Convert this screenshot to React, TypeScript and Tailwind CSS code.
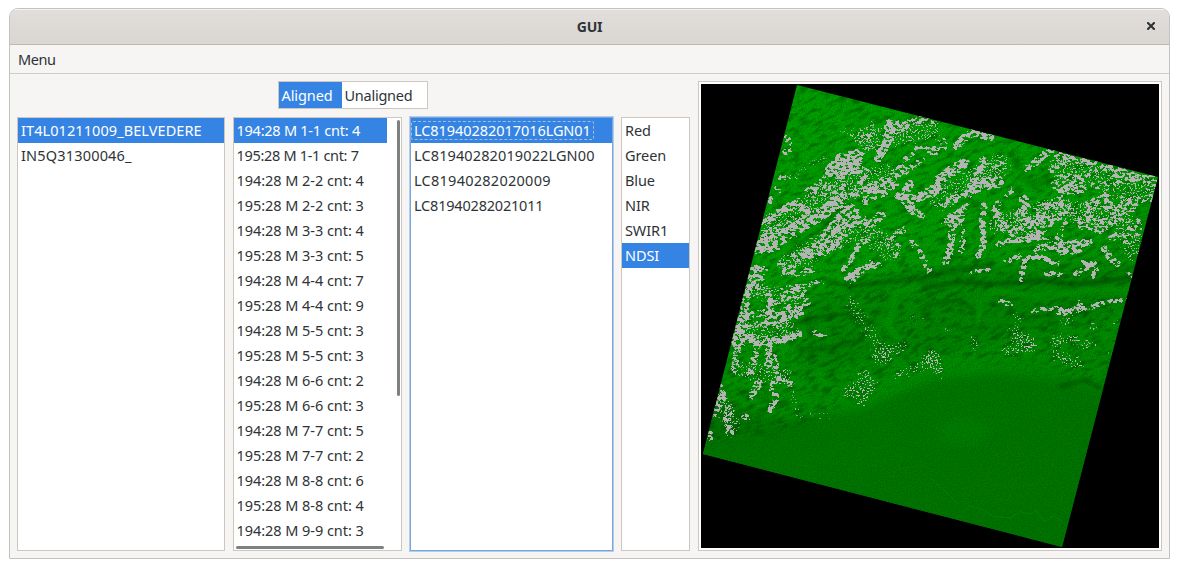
import React from "react";

type Item = [label: string, tracking?: string];

const scenes: Item[] = [
  ["IT4L01211009_BELVEDERE", "tracking-[0.08px]"],
  ["IN5Q31300046_", "tracking-[0.18px]"],
];

const groups: Item[] = [
  ["194:28 M 1-1 cnt: 4", "tracking-[-0.25px]"],
  ["195:28 M 1-1 cnt: 7", "tracking-[-0.32px]"],
  ["194:28 M 2-2 cnt: 4"],
  ["195:28 M 2-2 cnt: 3"],
  ["194:28 M 3-3 cnt: 4"],
  ["195:28 M 3-3 cnt: 5"],
  ["194:28 M 4-4 cnt: 7"],
  ["195:28 M 4-4 cnt: 9"],
  ["194:28 M 5-5 cnt: 3"],
  ["195:28 M 5-5 cnt: 3"],
  ["194:28 M 6-6 cnt: 2"],
  ["195:28 M 6-6 cnt: 3"],
  ["194:28 M 7-7 cnt: 5"],
  ["195:28 M 7-7 cnt: 2"],
  ["194:28 M 8-8 cnt: 6"],
  ["195:28 M 8-8 cnt: 4"],
  ["194:28 M 9-9 cnt: 3"],
];

const products: Item[] = [
  ["LC81940282017016LGN01", "tracking-[-0.06px]"],
  ["LC81940282019022LGN00", "tracking-[0.12px]"],
  ["LC81940282020009", "tracking-[0.26px]"],
  ["LC81940282021011", "tracking-[-0.2px]"],
];

const bands: Item[] = [["Red"], ["Green"], ["Blue"], ["NIR"], ["SWIR1"], ["NDSI"]];

type Stroke = [d: string, width: number, density: number];

// Snow cover: each stroke is a ridge or snow field with its own density.
const snow: Stroke[] = [
  ["M832 170 L842 160 L856 157 L856 166 L838 172", 11, 1],
  ["M889 124 L889 138 L884 148 L878 158", 7, 1],
  ["M892 126 L903 124 M898 130 L912 122 L925 118 L934 121", 7, 0.75],
  ["M858 140 L874 134 L872 124 M858 152 L872 148", 6, 0.6],
  ["M900 165 L912 154 L922 145 L934 152 M906 172 L922 160", 6, 0.65],
  ["M872 190 L886 180 L902 170 M884 192 L896 182 M866 172 L860 180", 8, 0.65],
  ["M898 196 L906 200 L912 210 M908 200 L922 196 L938 187 M906 190 L910 184", 7, 1],
  ["M912 210 L922 216", 6, 0.75],
  ["M764 222 L776 214 L796 204 M790 206 L806 208", 7, 0.85],
  ["M758 246 L776 240 L792 232 L806 223 L824 212 L838 200", 11, 0.75],
  ["M762 236 L780 228 L796 222 L812 214", 9, 0.6],
  ["M810 220 L824 212 L834 204", 8, 1],
  ["M757 250 L776 248", 7, 0.75],
  ["M806 190 L820 186 L826 176 M838 196 L846 182 M815 197 L838 186", 8, 0.6],
  ["M828 240 L838 230 L850 214", 17, 0.75],
  ["M806 254 L820 246 L838 246", 8, 0.65],
  ["M796 262 L812 256 L826 252 M790 258 L812 246", 5, 0.65],
  ["M848 196 L860 192 L874 186 M866 200 L880 192", 9, 0.68],
  ["M858 222 L872 224 L882 214", 8, 0.68],
  ["M843 270 L851 260 L860 243 L868 240 M846 278 L856 270 L880 265 M852 282 L864 268 L872 262", 4.5, 0.95],
  ["M888 243 L898 232 L908 228 M894 256 L898 246 M912 242 L922 256 L930 272", 6, 0.65],
  ["M776 178 L800 176 M776 188 L780 192", 5, 0.65],
  ["M786 138 L790 142 M784 153 L790 150", 5, 0.85],
  ["M770 196 L771 202", 5, 0.8],
  ["M755 270 L749 284 L744 304 L740 326 L736 342", 9, 0.78],
  ["M756 270 L764 270 M780 264 L792 268 M784 274 L802 272 L812 270", 7, 0.65],
  ["M782 290 L798 286 L822 282 M766 290 L772 304 L768 318 M762 278 L758 292", 6, 0.65],
  ["M770 304 L786 298 L804 292 M776 316 L790 308 L808 302 M784 320 L800 314", 7, 0.65],
  ["M745 316 L764 312 L784 316 L800 312 M746 326 L764 324 L784 324", 7, 0.63],
  ["M738 338 L756 338 L772 342 L788 338 L798 334", 7, 0.9],
  ["M757 342 L755 358 L750 372 M769 342 L768 364 M742 342 L736 356 L734 370", 7, 0.7],
  ["M775 358 L777 376 M774 382 L788 380 L792 386", 6, 0.7],
  ["M758 382 L752 396 M760 382 L756 388", 6, 0.8],
  ["M772 388 L776 398 L770 410", 6, 0.75],
  ["M722 396 L718 406 L714 414 M730 408 L726 420 L730 434", 7, 0.75],
  ["M744 416 L748 418 M710 432 L710 440", 5, 0.8],
  ["M720 384 L724 400", 6, 0.55],
  ["M812 332 L824 336", 6, 0.6],
  ["M956 146 L964 138 L972 132 L990 137", 7, 0.85],
  ["M932 152 L944 148 M938 144 L948 140", 7, 0.55],
  ["M932 192 L940 180 L950 172 L964 163", 9, 0.9],
  ["M942 206 L956 196 L970 190 M952 202 L974 182 L982 160", 6, 0.7],
  ["M970 192 L980 184 L998 182", 10, 0.85],
  ["M982 172 L986 158 M994 166 L1002 162", 6, 0.6],
  ["M1006 198 L1014 188 M1028 200 L1022 212", 7, 0.5],
  ["M1027 168 L1036 162 L1048 152", 6, 0.95],
  ["M1054 153 L1070 160 L1094 162 M1050 170 L1064 164", 7, 0.7],
  ["M1058 178 L1076 178 L1094 172 M1054 186 L1080 182", 8, 0.63],
  ["M1062 192 L1082 188", 8, 0.85],
  ["M1104 166 L1120 172 L1136 178 L1156 178", 9, 0.6],
  ["M1108 182 L1132 180 M1124 196 L1150 200 L1152 188 M1094 186 L1108 192", 10, 0.48],
  ["M1090 206 L1104 200 L1116 212 L1130 206 M1088 220 L1098 228 L1118 218", 12, 0.65],
  ["M1036 232 L1052 220 L1066 208 M1040 210 L1060 202 M1032 222 L1044 216", 9, 0.68],
  ["M1060 236 L1066 220 M1072 212 L1082 228", 6, 0.6],
  ["M998 216 L1004 228 L1018 232 L1030 238 M1018 216 L1028 224 M1024 200 L1020 222", 10, 0.63],
  ["M998 244 L1016 240 L1038 236", 5, 0.85],
  ["M954 214 L952 232 L950 250 L946 262 M962 210 L960 222", 6, 0.85],
  ["M944 222 L954 214 L966 206 M963 232 L961 252", 6, 0.7],
  ["M984 206 L982 222 L984 244 L978 256 M994 212 L998 204", 6, 0.8],
  ["M1036 250 L1052 248 L1070 244 L1090 242 M1060 252 L1080 250", 6, 0.8],
  ["M1038 240 L1060 240", 8, 0.5],
  ["M1006 261 L1020 256 M1026 260 L1022 272 L1022 280 M1028 258 L1044 258 L1058 264 M1046 274 L1060 274", 4.5, 0.95],
  ["M1076 274 L1090 266 M1082 262 L1096 264 M1096 270 L1094 276", 5, 0.85],
  ["M1104 248 L1110 258 L1118 264 M1108 240 L1120 234", 6, 0.75],
  ["M1130 222 L1128 244 M1138 222 L1138 232", 8, 0.55],
  ["M970 272 L990 270 M1128 272 L1132 278", 3, 0.95],
  ["M1000 301 L1012 305 M1030 312 L1050 308 L1066 310 L1090 308 L1104 302 L1126 300", 4, 0.85],
  ["M1058 314 L1078 310 M1080 302 L1078 310", 5, 0.7],
];

// Loosely scattered snow pixels.
const scatter: Stroke[] = [
  ["M848 392 L874 386 M862 402 L864 374", 18, 0.62],
  ["M896 376 L914 370 L936 358", 14, 0.62],
  ["M880 360 L904 346", 18, 0.54],
  ["M930 352 L942 376", 14, 0.64],
  ["M972 338 L976 350", 12, 0.66],
  ["M908 316 L930 322 M944 326 L950 334", 12, 0.54],
  ["M1012 314 L1024 320 M1060 324 L1074 316 M1088 322 L1096 330", 10, 0.72],
  ["M1010 330 L1030 340 M1052 340 L1076 338 M1082 346 L1094 344", 12, 0.7],
  ["M1006 350 L1032 348 M1056 356 L1080 364", 17, 0.6],
  ["M1104 354 L1112 350 M1112 328 L1118 318", 8, 0.74],
  ["M1040 286 L1092 285", 6, 0.8],
  ["M790 374 L798 416 L830 416", 18, 0.47],
  ["M850 300 L880 350", 24, 0.47],
  ["M800 170 L826 158 M840 130 L866 136", 18, 0.47],
  ["M770 230 L830 190 L890 175 M790 262 L860 225 L890 250 M870 140 L930 130", 30, 0.56],
  ["M940 200 L1000 165 M1000 225 L1050 210 L1120 215 L1135 250 M1060 165 L1145 190", 30, 0.58],
  ["M750 290 L800 300 M745 330 L790 330 M740 370 L775 375 M720 400 L732 425", 24, 0.56],
];

// Valleys and shaded slopes in the terrain.
const valleys: Stroke[] = [
  ["M792 250 L806 240 L826 224 L842 208 L846 198", 3, 0.35],
  ["M828 282 L852 286 L884 282 L924 278 L956 270 L992 264", 5, 0.4],
  ["M790 326 L812 318 L846 314 L872 322", 4, 0.45],
  ["M924 288 L960 282 L1000 284 L1040 280 L1080 284 L1130 278", 5, 0.5],
  ["M800 350 L830 348 L860 340 L880 326", 6, 0.3],
  ["M926 306 L960 300 L976 312 L986 296", 4, 0.4],
  ["M938 274 L956 256 L966 240", 5, 0.3],
  ["M1024 176 L1036 186 L1046 178", 10, 0.2],
  ["M738 390 L760 398 L780 406", 5, 0.3],
  ["M1062 386 L1084 380 L1100 388", 5, 0.4],
];

const rivers: Stroke[] = [
  ["M897 336 L888 326 L894 306 L896 292 L916 288", 7, 0.95],
  ["M978 322 L980 300 L998 290 L1030 296 L1080 292 L1130 290", 7, 0.85],
  ["M870 336 L890 318", 6, 0.85],
  ["M876 366 L872 342", 6, 0.55],
  ["M756 400 L772 394", 5, 0.5],
];

function Strokes({ items, color, spread = 1 }: { items: Stroke[]; color: string; spread?: number }) {
  return (
    <g fill="none" stroke={color} strokeLinecap="round" strokeLinejoin="round">
      {items.map(([d, width, density]) => (
        <path key={d} d={d} strokeWidth={width * spread} strokeOpacity={density} />
      ))}
    </g>
  );
}

const imageArea = {
  filterUnits: "userSpaceOnUse",
  x: 701,
  y: 84,
  width: 458,
  height: 464,
  colorInterpolationFilters: "sRGB",
} as const;

function SatelliteImage() {
  return (
    <svg
      width="458"
      height="464"
      viewBox="701 84 458 464"
      className="block bg-black"
      role="img"
    >
      <defs>
        <clipPath id="footprint">
          <path d="M797 85 L1158 177 L1062 547 L703 454 Z" shapeRendering="crispEdges" />
        </clipPath>
        <mask id="mountains" maskUnits="userSpaceOnUse" x="701" y="84" width="458" height="464">
          <path
            d="M680 60 H1180 V385 L1110 390 L1060 374 L1000 362 L930 368 L860 398 L790 430 L680 450 Z"
            fill="#fff"
            filter="url(#plainEdge)"
          />
        </mask>
        <linearGradient id="ground" gradientUnits="userSpaceOnUse" x1="820" y1="90" x2="950" y2="540">
          <stop offset="0" stopColor="#00a200" />
          <stop offset="0.35" stopColor="#009e00" />
          <stop offset="0.6" stopColor="#009000" />
          <stop offset="1" stopColor="#007c00" />
        </linearGradient>
        <filter id="soft" x="-10%" y="-10%" width="120%" height="120%">
          <feGaussianBlur stdDeviation="1.8" />
        </filter>
        <filter id="plainEdge" x="-10%" y="-10%" width="120%" height="120%">
          <feGaussianBlur stdDeviation="5" />
        </filter>
        <filter
          id="relief"
          filterUnits="userSpaceOnUse"
          x="400"
          y="-100"
          width="1100"
          height="900"
          colorInterpolationFilters="sRGB"
        >
          <feTurbulence type="fractalNoise" baseFrequency="0.09 0.25" numOctaves="4" seed="8" />
          <feColorMatrix values="0 0 0 0 0  0 0 0 0 0.14  0 0 0 0 0  3 0 0 0 -1.35" />
        </filter>
        <filter id="grain" {...imageArea}>
          <feTurbulence type="fractalNoise" baseFrequency="0.8" numOctaves="2" seed="3" />
          <feColorMatrix values="0 0 0 0 0  0 0 0 0 0.2  0 0 0 0 0  1.8 0 0 0 -0.75" />
        </filter>
        <filter id="snowCover" {...imageArea}>
          <feTurbulence type="fractalNoise" baseFrequency="0.22 0.32" numOctaves="4" seed="21" result="noise" />
          <feColorMatrix in="noise" values="0 0 0 0 0  0 0 0 0 0  0 0 0 0 0  3.4 0 0 0 -1.25" result="mottle" />
          <feGaussianBlur in="SourceAlpha" stdDeviation="1.5" result="density" />
          <feComposite in="density" in2="mottle" operator="arithmetic" k1="0.9" k2="0.34" k3="0" k4="0" />
          <feComponentTransfer result="cut">
            <feFuncA type="linear" slope="16" intercept="-7.8" />
          </feComponentTransfer>
          <feFlood floodColor="#b4b4b4" />
          <feComposite in2="cut" operator="in" />
        </filter>
        <filter id="speckle" {...imageArea}>
          <feTurbulence type="fractalNoise" baseFrequency="0.6" numOctaves="2" seed="5" result="noise" />
          <feColorMatrix in="noise" values="0 0 0 0 0  0 0 0 0 0  0 0 0 0 0  3 0 0 0 -1.1" result="mottle" />
          <feGaussianBlur in="SourceAlpha" stdDeviation="4" result="density" />
          <feComposite in="density" in2="mottle" operator="arithmetic" k1="1" k2="0" k3="0" k4="0" />
          <feComponentTransfer result="cut">
            <feFuncA type="linear" slope="16" intercept="-6.4" />
          </feComponentTransfer>
          <feFlood floodColor="#b4b4b4" />
          <feComposite in2="cut" operator="in" />
        </filter>
      </defs>
      <rect x="701" y="84" width="458" height="464" fill="#000" />
      <g clipPath="url(#footprint)">
        <rect x="701" y="84" width="458" height="464" fill="url(#ground)" />
        <path
          d="M690 395 L780 420 L860 410 L930 380 L1000 372 L1060 380 L1115 395 L1080 560 L690 470 Z"
          fill="#007300"
          fillOpacity="0.85"
          filter="url(#plainEdge)"
        />
        <path
          d="M800 300 L900 270 L1140 265 L1120 310 L1000 340 L900 360 L800 370 Z"
          fill="#004c00"
          fillOpacity="0.2"
          filter="url(#plainEdge)"
        />
        <g mask="url(#mountains)">
          <g transform="rotate(-24 930 316)">
            <rect x="400" y="-100" width="1100" height="900" opacity="0.36" filter="url(#relief)" />
          </g>
        </g>
        <g filter="url(#soft)">
          <Strokes items={valleys} color="#004000" />
          <Strokes items={rivers} color="#009000" />
        </g>
        <ellipse cx="965" cy="432" rx="24" ry="14" fill="#008600" fillOpacity="0.4" filter="url(#plainEdge)" />
        <rect x="701" y="84" width="458" height="464" opacity="0.4" filter="url(#grain)" />
        <g filter="url(#speckle)">
          <Strokes items={scatter} color="#000" />
        </g>
        <g filter="url(#snowCover)">
          <Strokes items={snow} color="#000" spread={1.3} />
        </g>
        <path
          d="M930 478 L944 490 L958 504 M962 514 L970 506 L982 509 L992 516 L1010 518 L1020 512 L1030 514 L1036 510 L1044 522 L1054 516 L1062 521"
          fill="none"
          stroke="#009400"
          strokeOpacity="0.45"
        />
      </g>
    </svg>
  );
}

function List({
  items,
  selected,
  className,
  rowClass = "pl-[3px]",
  tracking = "",
}: {
  items: Item[];
  selected: number;
  className: string;
  rowClass?: string;
  tracking?: string;
}) {
  return (
    <ul className={`shrink-0 overflow-hidden border bg-white ${className}`}>
      {items.map(([label, ownTracking], i) => (
        <li
          key={label}
          className={`flex h-[25px] items-center whitespace-pre pb-[2px] ${rowClass} ${
            ownTracking ?? tracking
          } ${i === selected ? "bg-[#3584e4] text-white" : ""}`}
        >
          {label}
        </li>
      ))}
    </ul>
  );
}

export default function App() {
  return (
    <div className="h-[568px] w-[1179px] bg-white pl-[9px] pt-2 font-['Noto_Sans',sans-serif] text-[14.5px] leading-5 text-[#2e3436]">
      <div className="flex h-[551px] w-[1161px] flex-col overflow-hidden rounded-t-[9px] border border-[#c2c2c0] bg-[#f6f5f4]">
        <header className="relative flex h-9 shrink-0 items-center justify-center border-b border-[#bfb8b1] bg-linear-to-b from-[#e1dedb] to-[#dad6d2] shadow-[inset_0_1px_#f5f4f2]">
          <h1 className="text-[14px] font-bold tracking-[-0.3px]">GUI</h1>
          <button className="absolute right-[14px] top-[13px]" aria-label="Close">
            <svg width="8" height="8" viewBox="0 0 8 8" className="block">
              <path d="M1 1 L7 7 M7 1 L1 7" stroke="#2e3436" strokeWidth="2.1" strokeLinecap="square" />
            </svg>
          </button>
        </header>
        <nav className="flex h-[29px] shrink-0 items-center border-b border-[#cfcdcb] pl-2">
          <span className="tracking-[-0.4px]">Menu</span>
        </nav>
        <main className="flex grow gap-2 px-[7px] pt-[7px]">
          <div className="flex w-[673px] shrink-0 flex-col">
            <div className="flex justify-center pr-[2px]">
              <div className="flex h-7 w-[150px] border border-[#cdc7c2] bg-white">
                <button className="flex h-full w-[63px] items-center bg-[#3584e4] pl-[3px] tracking-[-0.1px] text-white">
                  Aligned
                </button>
                <button className="flex h-full items-center pl-[3px] tracking-[-0.25px]">
                  Unaligned
                </button>
              </div>
            </div>
            <div className="flex gap-2 pt-2">
              <List items={scenes} selected={0} className="h-[434px] w-[208px] border-[#cdc7c2]" />
              <div className="relative shrink-0">
                <List
                  items={groups}
                  selected={0}
                  className="h-[434px] w-[169px] border-[#cdc7c2]"
                  rowClass="w-[153px] pl-[2.5px]"
                  tracking="tracking-[-0.05px]"
                />
                <div className="absolute right-[2px] top-[3px] h-[276px] w-[3px] rounded-full bg-[#7e8182]" />
                <div className="absolute bottom-[2px] left-[3px] h-[3px] w-[148px] rounded-full bg-[#7e8182]" />
              </div>
              <div className="relative shrink-0">
                <List
                  items={products}
                  selected={0}
                  className="h-[434px] w-[203px] border-[#78a5dc] shadow-[0_0_0_1px_#b4cdec]"
                />
                <div className="absolute left-px top-[4px] h-[19px] w-[183px] rounded-[2px] border border-dashed border-[#a5bddb]" />
              </div>
              <List
                items={bands}
                selected={5}
                className="h-[434px] w-[69px] border-[#cdc7c2]"
                tracking="tracking-[-0.1px]"
              />
            </div>
          </div>
          <div className="h-[470px] w-[464px] shrink-0 border border-[#cdc7c2] bg-white p-[2px]">
            <SatelliteImage />
          </div>
        </main>
      </div>
    </div>
  );
}
